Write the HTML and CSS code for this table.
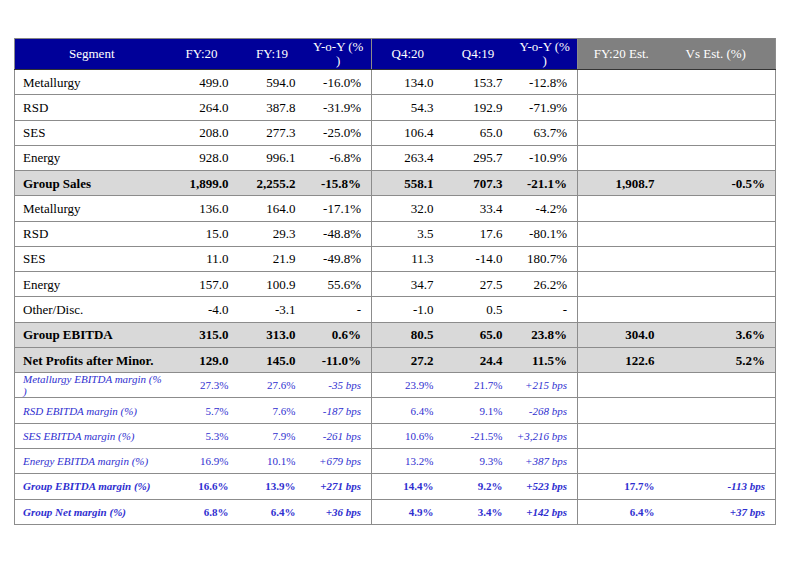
FILE: index.html
```html
<!DOCTYPE html>
<html>
<head>
<meta charset="utf-8">
<link rel="stylesheet" href="styles.css">
</head>
<body>
<table class="fin">
  <colgroup>
    <col class="c-seg"><col class="c-fy20"><col class="c-fy19"><col class="c-yoy1">
    <col class="c-q420"><col class="c-q419"><col class="c-yoy2">
    <col class="c-est"><col class="c-vs">
  </colgroup>
  <thead>
    <tr class="head">
      <th class="lb">Segment</th>
      <th>FY:20</th>
      <th>FY:19</th>
      <th class="rb">Y-o-Y (%<br>)</th>
      <th>Q4:20</th>
      <th>Q4:19</th>
      <th class="rb">Y-o-Y (%<br>)</th>
      <th class="est">FY:20 Est.</th>
      <th class="est vs rb">Vs Est. (%)</th>
    </tr>
  </thead>
  <tbody>
    <tr><td class="lb">Metallurgy</td><td>499.0</td><td>594.0</td><td class="rb">-16.0%</td><td>134.0</td><td>153.7</td><td class="rb">-12.8%</td><td></td><td class="rb"></td></tr>
    <tr><td class="lb">RSD</td><td>264.0</td><td>387.8</td><td class="rb">-31.9%</td><td>54.3</td><td>192.9</td><td class="rb">-71.9%</td><td></td><td class="rb"></td></tr>
    <tr><td class="lb">SES</td><td>208.0</td><td>277.3</td><td class="rb">-25.0%</td><td>106.4</td><td>65.0</td><td class="rb">63.7%</td><td></td><td class="rb"></td></tr>
    <tr><td class="lb">Energy</td><td>928.0</td><td>996.1</td><td class="rb">-6.8%</td><td>263.4</td><td>295.7</td><td class="rb">-10.9%</td><td></td><td class="rb"></td></tr>
    <tr class="total"><td class="lb">Group Sales</td><td>1,899.0</td><td>2,255.2</td><td class="rb">-15.8%</td><td>558.1</td><td>707.3</td><td class="rb">-21.1%</td><td>1,908.7</td><td class="rb">-0.5%</td></tr>
    <tr><td class="lb">Metallurgy</td><td>136.0</td><td>164.0</td><td class="rb">-17.1%</td><td>32.0</td><td>33.4</td><td class="rb">-4.2%</td><td></td><td class="rb"></td></tr>
    <tr><td class="lb">RSD</td><td>15.0</td><td>29.3</td><td class="rb">-48.8%</td><td>3.5</td><td>17.6</td><td class="rb">-80.1%</td><td></td><td class="rb"></td></tr>
    <tr><td class="lb">SES</td><td>11.0</td><td>21.9</td><td class="rb">-49.8%</td><td>11.3</td><td>-14.0</td><td class="rb">180.7%</td><td></td><td class="rb"></td></tr>
    <tr><td class="lb">Energy</td><td>157.0</td><td>100.9</td><td class="rb">55.6%</td><td>34.7</td><td>27.5</td><td class="rb">26.2%</td><td></td><td class="rb"></td></tr>
    <tr><td class="lb">Other/Disc.</td><td>-4.0</td><td>-3.1</td><td class="rb">-</td><td>-1.0</td><td>0.5</td><td class="rb">-</td><td></td><td class="rb"></td></tr>
    <tr class="total"><td class="lb">Group EBITDA</td><td>315.0</td><td>313.0</td><td class="rb">0.6%</td><td>80.5</td><td>65.0</td><td class="rb">23.8%</td><td>304.0</td><td class="rb">3.6%</td></tr>
    <tr class="total"><td class="lb">Net Profits after Minor.</td><td>129.0</td><td>145.0</td><td class="rb">-11.0%</td><td>27.2</td><td>24.4</td><td class="rb">11.5%</td><td>122.6</td><td class="rb">5.2%</td></tr>
    <tr class="margin"><td class="lb">Metallurgy EBITDA margin (%<br>)</td><td>27.3%</td><td>27.6%</td><td class="rb bps">-35 bps</td><td>23.9%</td><td>21.7%</td><td class="rb bps">+215 bps</td><td></td><td class="rb"></td></tr>
    <tr class="margin"><td class="lb">RSD EBITDA margin (%)</td><td>5.7%</td><td>7.6%</td><td class="rb bps">-187 bps</td><td>6.4%</td><td>9.1%</td><td class="rb bps">-268 bps</td><td></td><td class="rb"></td></tr>
    <tr class="margin"><td class="lb">SES EBITDA margin (%)</td><td>5.3%</td><td>7.9%</td><td class="rb bps">-261 bps</td><td>10.6%</td><td>-21.5%</td><td class="rb bps">+3,216 bps</td><td></td><td class="rb"></td></tr>
    <tr class="margin"><td class="lb">Energy EBITDA margin (%)</td><td>16.9%</td><td>10.1%</td><td class="rb bps">+679 bps</td><td>13.2%</td><td>9.3%</td><td class="rb bps">+387 bps</td><td></td><td class="rb"></td></tr>
    <tr class="margin strong"><td class="lb">Group EBITDA margin (%)</td><td>16.6%</td><td>13.9%</td><td class="rb bps">+271 bps</td><td>14.4%</td><td>9.2%</td><td class="rb bps">+523 bps</td><td>17.7%</td><td class="rb bps">-113 bps</td></tr>
    <tr class="margin strong"><td class="lb">Group Net margin (%)</td><td>6.8%</td><td>6.4%</td><td class="rb bps">+36 bps</td><td>4.9%</td><td>3.4%</td><td class="rb bps">+142 bps</td><td>6.4%</td><td class="rb bps">+37 bps</td></tr>
  </tbody>
</table>
</body>
</html>
```
FILE: styles.css
```css
html, body {
  margin: 0;
  padding: 0;
  background: #ffffff;
}

body {
  font-family: "Liberation Serif", "Times New Roman", serif;
  font-size: 13px;
  color: #000000;
}

.fin {
  margin: 38px 0 0 14px;
  width: 761px;
  table-layout: fixed;
  border-collapse: collapse;
  border-top: 1px solid #858585;
}

.c-seg { width: 150px; }
.c-fy20 { width: 74px; }
.c-fy19 { width: 67px; }
.c-yoy1 { width: 66px; }
.c-q420 { width: 72px; }
.c-q419 { width: 69px; }
.c-yoy2 { width: 65px; }
.c-est { width: 87px; }
.c-vs { width: 111px; }

.fin th,
.fin td {
  padding: 0 10px 0 4px;
  border-bottom: 1px solid #8c8c8c;
  vertical-align: middle;
  text-align: right;
  white-space: nowrap;
  line-height: 13px;
}

.fin th {
  height: 30px;
  background: #000099;
  color: #ffffff;
  font-weight: normal;
  text-align: center;
  padding: 0 4px;
  line-height: 14px;
  border-bottom: 1px solid #333333;
}

.fin th.est {
  background: #808080;
}

.fin th.vs {
  padding-right: 12px;
}

.fin td {
  height: 24.28px;
}

.fin .lb {
  text-align: left;
  padding-left: 8px;
  border-left: 1px solid #8c8c8c;
}

.fin th.lb {
  text-align: center;
}

.fin .rb {
  border-right: 1px solid #8c8c8c;
}

.total td {
  background: #d9d9d9;
  font-weight: bold;
}

.margin td {
  color: #2f2fd0;
  font-size: 11px;
  line-height: 12px;
}

.margin td.lb,
.margin td.bps {
  font-style: italic;
}

.strong td {
  font-weight: bold;
}
```
